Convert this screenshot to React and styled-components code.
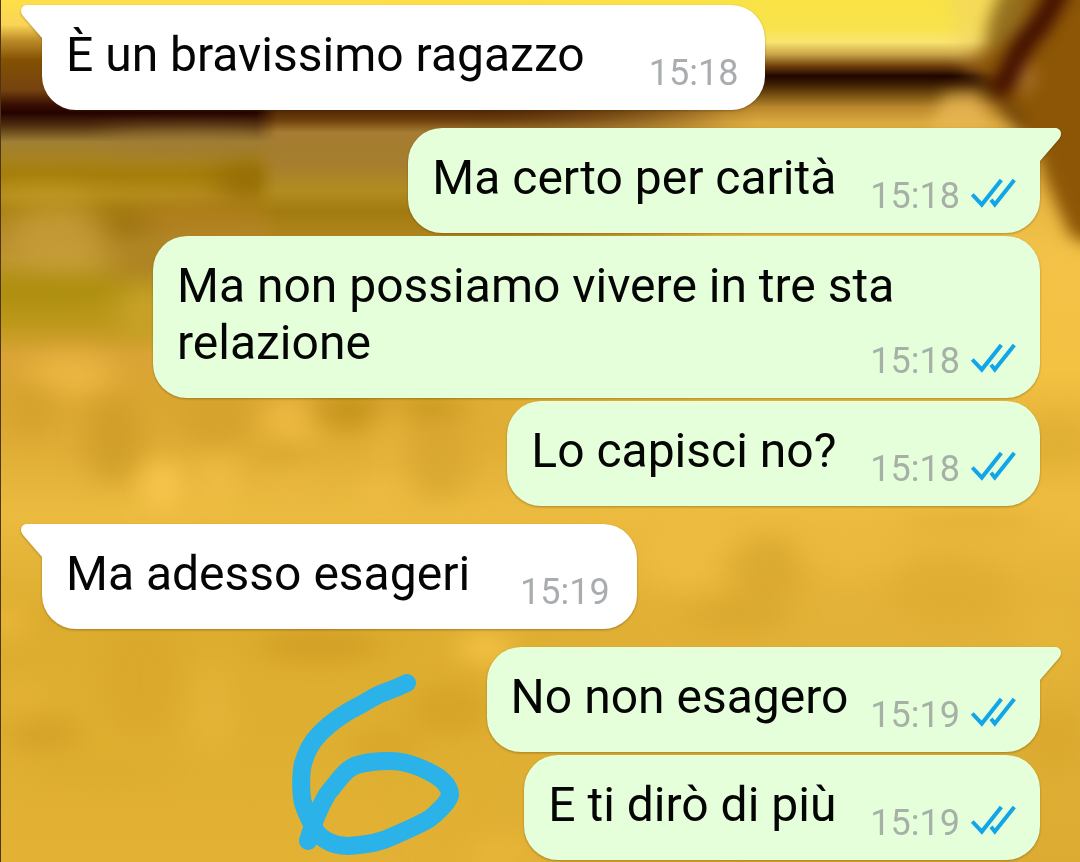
import React, { Component } from 'react'
import styled, { createGlobalStyle } from 'styled-components'

const GlobalStyle = createGlobalStyle`
  * {
    box-sizing: border-box;
  }
  body {
    margin: 0;
    font-family: Roboto, "Noto Sans", sans-serif;
  }
`

const MainContainer = styled.main`
  position: relative;
  min-height: 100vh;
  overflow: hidden;
  background: #e0b033;
`

const Wallpaper = styled.svg`
  position: absolute;
  inset: 0;
  width: 100%;
  height: 100%;
`

const Chat = styled.div`
  position: relative;
  display: flex;
  flex-direction: column;
  gap: 18px;
  padding: 5px 40px 2px 42px;
`

const Group = styled.section`
  display: flex;
  flex-direction: column;
  align-items: ${(props) => (props.$mine ? 'flex-end' : 'flex-start')};
  gap: 3px;
`

const Bubble = styled.article`
  position: relative;
  display: flex;
  align-items: flex-end;
  justify-content: space-between;
  gap: ${(props) => props.$gap}px;
  max-width: 887px;
  padding: ${(props) => (props.$mine ? '21px 24px 16px' : '21px 27px 16px 24px')};
  border-radius: 34px;
  background: ${(props) => (props.$mine ? '#e5ffdb' : '#ffffff')};
  filter: drop-shadow(0 1px 1px rgba(60, 40, 0, 0.35));
  ${(props) => props.$tail && (props.$mine
    ? 'border-top-right-radius: 0;'
    : 'border-top-left-radius: 0;')}
`

const Tail = styled.svg`
  position: absolute;
  top: 0;
  width: 22px;
  height: 34px;
  fill: ${(props) => (props.$mine ? '#e5ffdb' : '#ffffff')};
  ${(props) => (props.$mine ? 'right: -21px; transform: scaleX(-1);' : 'left: -21px;')}
`

const Text = styled.p`
  margin: 0;
  padding-bottom: ${(props) => (props.$wrapped ? '0' : '11px')};
  color: #050505;
  font-size: 48px;
  line-height: 57px;
`

// on a wrapped message the time floats beside the last line of text
const Info = styled.span`
  display: flex;
  align-items: flex-end;
  gap: 10px;
  ${(props) => props.$wrapped && 'float: right; margin-top: 26px;'}
`

const Time = styled.time`
  color: ${(props) => (props.$mine ? '#a6b0a6' : '#a9adaf')};
  font-size: 36px;
  line-height: 42px;
`

const Ticks = styled.svg`
  width: 46px;
  height: 30px;
  margin-bottom: 9px;
  fill: none;
  stroke: #12a5e8;
  stroke-width: 4;
`

const Doodle = styled.svg`
  position: absolute;
  top: 650px;
  left: 270px;
  width: 220px;
  height: 212px;
  fill: none;
  stroke: #2bb2e9;
  stroke-width: 54;
  stroke-linecap: round;
  stroke-linejoin: round;
`

const LeftEdge = styled.div`
  position: absolute;
  inset: 0 auto 0 0;
  width: 1px;
  background: #4b3610;
`

const leftStops = [
  [0, '#ffdf48'], [25, '#f9d457'], [40, '#bd8c28'], [60, '#845104'],
  [90, '#75430f'], [104, '#3c1003'], [113, '#240200'], [126, '#523010'],
  [142, '#9f8035'], [158, '#a88220'], [175, '#a57e0a'], [195, '#b48d1c'],
  [210, '#ab8314'], [235, '#b48a29'], [260, '#bd962d'], [290, '#b19214'],
  [325, '#be991c'], [355, '#daa436'], [400, '#dba732'], [450, '#e0ae36'],
  [515, '#ebbb40'], [620, '#dcac2f'], [740, '#dfaf31'], [862, '#e3b235'],
]

const rightStops = [
  [0, '#f8e244'], [28, '#f9e34c'], [42, '#fae56f'], [54, '#cba74b'],
  [66, '#70400c'], [76, '#1e0500'], [84, '#3c1d02'], [96, '#7b5512'],
  [107, '#b9872c'], [122, '#dba93e'], [250, '#f2c147'], [370, '#f3c243'],
  [430, '#e6b438'], [450, '#e4b337'], [500, '#edbc40'], [600, '#e3b238'],
  [862, '#dcac32'],
]

// cx, cy, rx, ry, colour, opacity
const spots = [
  [246, 182, 30, 24, '#936a04', 0.8],
  [118, 226, 40, 14, '#936b08', 0.8],
  [200, 218, 70, 20, '#b17c20', 0.6],
  [60, 238, 50, 34, '#c9a03c', 0.7],
  [190, 142, 90, 9, '#9f7b36', 0.9],
  [45, 195, 50, 10, '#c29b25', 0.7],
  [145, 262, 36, 24, '#ab8022', 0.8],
  [40, 293, 70, 12, '#ae8d0c', 0.7],
  [145, 310, 26, 28, '#cca62d', 0.8],
  [70, 376, 44, 22, '#efba45', 0.8],
  [30, 410, 24, 30, '#d2a02a', 0.7],
  [115, 440, 30, 44, '#cd9c27', 0.8],
  [215, 420, 40, 26, '#d2a02a', 0.7],
  [290, 422, 26, 26, '#f0bb44', 0.9],
  [350, 410, 34, 20, '#c4941a', 0.9],
  [430, 410, 34, 16, '#c8991f', 0.8],
  [392, 450, 14, 50, '#ecb842', 0.6],
  [162, 485, 18, 26, '#fdc950', 0.95],
  [218, 482, 20, 28, '#f1bf45', 0.8],
  [280, 455, 22, 14, '#d5a52c', 0.7],
  [440, 460, 30, 40, '#d6a52f', 0.7],
  [380, 492, 28, 12, '#f1be46', 0.7],
  [290, 490, 30, 20, '#ebb940', 0.6],
  [700, 560, 60, 34, '#f0bf44', 0.6],
  [765, 570, 40, 34, '#d6a52c', 0.7],
  [740, 615, 50, 20, '#d5a42b', 0.6],
  [850, 550, 50, 30, '#ebbb40', 0.5],
  [950, 590, 60, 36, '#dcab30', 0.6],
  [970, 522, 70, 12, '#e1ae34', 0.6],
  [320, 645, 60, 16, '#cf9d22', 0.8],
  [485, 648, 26, 16, '#f7c649', 0.9],
  [450, 710, 40, 26, '#d4a326', 0.8],
  [385, 745, 36, 18, '#d6a528', 0.7],
  [45, 735, 36, 20, '#d2a127', 0.8],
  [140, 680, 40, 60, '#d9a82b', 0.7],
  [100, 770, 70, 16, '#daaa2d', 0.6],
  [212, 710, 22, 50, '#e5b63a', 0.7],
  [20, 695, 30, 18, '#e6b539', 0.6],
  [8, 622, 16, 18, '#efbd3e', 0.8],
  [1055, 440, 30, 26, '#deaf35', 0.7],
  [1050, 640, 30, 40, '#e6b639', 0.7],
  [1055, 740, 30, 36, '#d6a52a', 0.6],
  [500, 855, 30, 20, '#ecba3d', 0.6],
]

const groups = [
  {
    mine: false,
    messages: [{ text: 'È un bravissimo ragazzo', time: '15:18', gap: 64 }],
  },
  {
    mine: true,
    messages: [
      { text: 'Ma certo per carità', time: '15:18', gap: 34 },
      { text: 'Ma non possiamo vivere in tre sta relazione', time: '15:18', gap: 0, wrapped: true },
      { text: 'Lo capisci no?', time: '15:18', gap: 34 },
    ],
  },
  {
    mine: false,
    messages: [{ text: 'Ma adesso esageri', time: '15:19', gap: 50 }],
  },
  {
    mine: true,
    messages: [
      { text: 'No non esagero', time: '15:19', gap: 22 },
      { text: 'E ti dirò di più', time: '15:19', gap: 34 },
    ],
  },
]

export default class App extends Component {
  renderStops = (stops) => stops.map(([y, color]) => (
    <stop key={y} offset={y / 862} stopColor={color} />
  ))

  renderWallpaper = () => (
    <Wallpaper viewBox="0 0 1080 862" preserveAspectRatio="none" colorInterpolationFilters="sRGB" aria-hidden="true">
      <defs>
        <linearGradient id="left" x2="0" y2="1">{this.renderStops(leftStops)}</linearGradient>
        <linearGradient id="right" x2="0" y2="1">{this.renderStops(rightStops)}</linearGradient>
        <linearGradient id="fade">
          <stop offset="0.35" stopColor="#000" />
          <stop offset="0.7" stopColor="#fff" />
        </linearGradient>
        <linearGradient id="strip" x2="0" y2="1">
          <stop offset="0" stopColor="#4a2002" />
          <stop offset="0.1" stopColor="#6a3c0a" />
          <stop offset="0.2" stopColor="#a57c32" />
          <stop offset="0.45" stopColor="#a67e2e" />
          <stop offset="0.64" stopColor="#b18c20" />
          <stop offset="0.8" stopColor="#a27b10" />
          <stop offset="1" stopColor="#b0861e" />
        </linearGradient>
        <linearGradient id="stripFade">
          <stop offset="0" stopColor="#000" />
          <stop offset="0.04" stopColor="#fff" />
          <stop offset="0.4" stopColor="#fff" />
          <stop offset="0.9" stopColor="#000" />
        </linearGradient>
        <mask id="rightMask"><rect width="1080" height="862" fill="url(#fade)" /></mask>
        <mask id="stripMask"><rect x="256" y="90" width="520" height="160" fill="url(#stripFade)" /></mask>
        <filter id="soft" x="-150%" y="-300%" width="400%" height="700%"><feGaussianBlur stdDeviation="15 11" /></filter>
        <filter id="leather" x="-50%" y="-50%" width="200%" height="200%"><feGaussianBlur stdDeviation="8" /></filter>
      </defs>
      <rect width="1080" height="862" fill="url(#left)" />
      <rect width="1080" height="862" fill="url(#right)" mask="url(#rightMask)" />
      {spots.map(([cx, cy, rx, ry, fill, opacity]) => (
        <ellipse
          key={`${cx}-${cy}`}
          cx={cx}
          cy={cy}
          rx={rx}
          ry={ry}
          fill={fill}
          opacity={opacity}
          filter="url(#soft)"
        />
      ))}
      <rect x="256" y="106" width="520" height="132" fill="url(#strip)" mask="url(#stripMask)" />
      <g filter="url(#leather)">
        <path d="M950 -10 L1000 -10 L990 50 L960 56 Z" fill="#f2d565" opacity="0.6" />
        <path d="M962 54 L990 50 L984 78 L962 70 Z" fill="#9a651c" opacity="0.7" />
        <path d="M945 94 L978 92 L990 128 L930 130 Z" fill="#efbd5a" opacity="0.7" />
        <path d="M1012 -20 H1100 V248 L1070 236 L1048 185 L1036 150 L1016 128 L992 98 L980 60 L994 20 Z" fill="#8c5606" />
        <path d="M1000 -10 L1034 -20 L1020 28 L990 54 L986 30 Z" fill="#94701f" />
        <path d="M1062 -14 L1042 22 L1022 46 L1008 76 L996 94" stroke="#3c0900" strokeWidth="20" fill="none" />
        <path d="M1030 66 L1024 92" stroke="#ac752c" strokeWidth="14" />
        <path d="M1002 104 L1024 128" stroke="#6a3f08" strokeWidth="12" />
      </g>
    </Wallpaper>
  )

  renderInfo = (message, mine) => (
    <Info $wrapped={message.wrapped}>
      <Time $mine={mine}>{message.time}</Time>
      {mine && (
        <Ticks viewBox="0 0 46 30" role="img" aria-label="Letto">
          <path d="M2.3 16.5 L11.8 26.6 L31.3 2" />
          <path d="M21 21.8 L24.8 26.6 L44.3 2" />
        </Ticks>
      )}
    </Info>
  )

  renderMessage = (message, mine, first) => (
    <Bubble key={message.text} $mine={mine} $tail={first} $gap={message.gap}>
      {first && (
        <Tail $mine={mine} viewBox="0 0 22 34" aria-hidden="true">
          <path d="M22 0 H6 C0.5 0 -2 6 2 11 L21 33 H22 Z" />
        </Tail>
      )}
      <Text $wrapped={message.wrapped}>
        {message.text}
        {message.wrapped && this.renderInfo(message, mine)}
      </Text>
      {!message.wrapped && this.renderInfo(message, mine)}
    </Bubble>
  )

  render() {
    return (
      <MainContainer>
        <GlobalStyle />
        {this.renderWallpaper()}
        <LeftEdge />
        <Chat>
          {groups.map((group, index) => (
            <Group key={index} $mine={group.mine}>
              {group.messages.map((message, i) => this.renderMessage(message, group.mine, i === 0))}
            </Group>
          ))}
        </Chat>
        <Doodle viewBox="0 0 660 636" aria-hidden="true">
          <path d="M411 99 C385 112 360 121 340 128 C310 140 290 155 265 168 C225 188 180 220 150 250 C125 275 108 305 98 345 C92 375 92 425 98 455 C104 480 115 500 125 520 C140 560 180 588 235 588 C300 584 335 576 370 558 C410 540 450 524 480 505 C500 490 534 458 540 436 C540 415 525 395 500 378 C470 360 425 342 395 336 C360 330 300 334 265 344 C240 351 225 366 212 382 L172 432 C155 460 140 495 128 528 L114 573" />
        </Doodle>
      </MainContainer>
    )
  }
}
